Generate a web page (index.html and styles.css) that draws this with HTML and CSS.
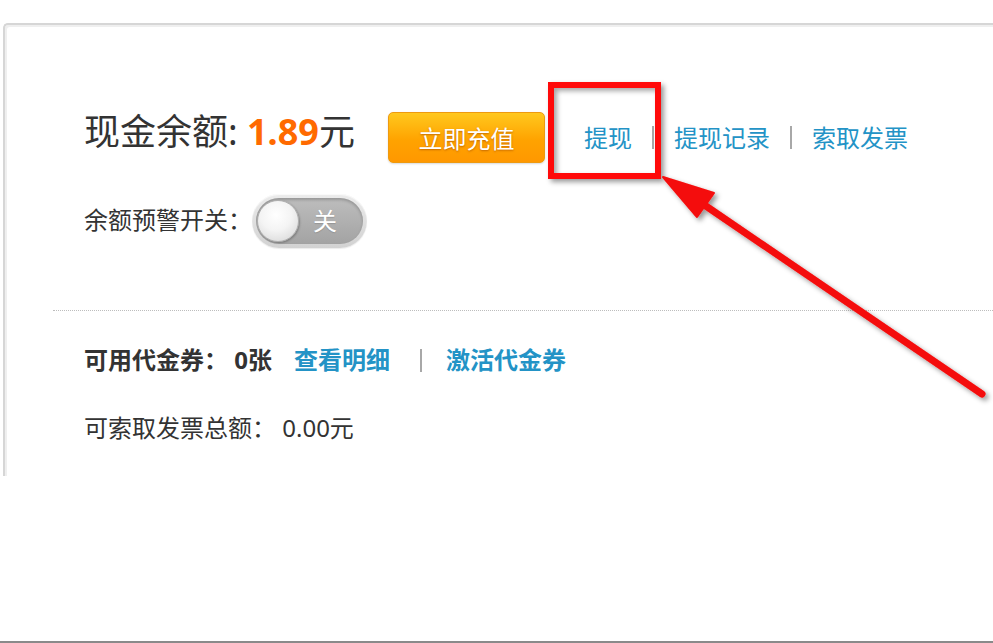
FILE: index.html
```html
<!DOCTYPE html>
<html lang="zh-CN">
<head>
<meta charset="utf-8">
<title>账户余额</title>
<link rel="stylesheet" href="styles.css">
</head>
<body>
<div class="page">
  <div class="card">
    <div class="row balance-row">
      <div class="balance">现金余额: <span class="amount">1.89</span>元</div>
      <a class="btn-recharge">立即充值</a>
      <div class="links">
        <a class="link">提现</a>
        <span class="sep"></span>
        <a class="link">提现记录</a>
        <span class="sep"></span>
        <a class="link">索取发票</a>
      </div>
    </div>
    <div class="row warn-row">
      <span class="warn-label">余额预警开关：</span>
      <div class="toggle">
        <div class="toggle-track">
          <span class="toggle-knob"></span>
          <span class="toggle-text">关</span>
        </div>
      </div>
    </div>
    <div class="divider"></div>
    <div class="row coupon-row">
      <span class="coupon-label">可用代金券： 0张</span>
      <a class="link bold first">查看明细</a>
      <span class="sep small"></span>
      <a class="link bold">激活代金券</a>
    </div>
    <div class="row invoice-row">可索取发票总额： 0.00元</div>
  </div>
  <div class="bottom-line"></div>
</div>

<div class="highlight-box"></div>
<svg class="arrow" width="993" height="643" viewBox="0 0 993 643">
  <defs>
    <filter id="sh" x="-20%" y="-20%" width="140%" height="140%">
      <feDropShadow dx="3" dy="3" stdDeviation="2.5" flood-color="#000" flood-opacity="0.4"/>
    </filter>
  </defs>
  <g filter="url(#sh)" fill="#f40a0a" stroke="#f40a0a">
    <line x1="982" y1="394" x2="700" y2="202" stroke-width="7" stroke-linecap="round"/>
    <polygon points="663,177 714,193 697,217" stroke-width="2" stroke-linejoin="round"/>
  </g>
</svg>
</body>
</html>
```

FILE: styles.css
```css
html, body {
  margin: 0;
  padding: 0;
  background: #ffffff;
}
body {
  width: 993px;
  height: 643px;
  overflow: hidden;
  position: relative;
  font-family: "Noto Sans", "Noto Sans CJK SC", sans-serif;
  color: #333333;
}
.page {
  height: 643px;
  display: flex;
  flex-direction: column;
}
.card {
  flex: none;
  box-sizing: border-box;
  height: 453px;
  margin-top: 23px;
  margin-left: 3px;
  border: 2px solid #d6d6d6;
  border-right: none;
  border-bottom: none;
  border-top-left-radius: 5px;
  box-shadow: inset 2px 2px 0 #efefef;
  padding-top: 87px;
}
.row {
  display: flex;
  align-items: center;
  padding-left: 79px;
}
.balance-row {
  height: 51px;
}
.balance {
  font-size: 36px;
  line-height: 40px;
  margin-bottom: 12px;
  white-space: nowrap;
}
.amount {
  color: #ff6a00;
  font-weight: bold;
}
.btn-recharge {
  box-sizing: border-box;
  width: 157px;
  height: 51px;
  margin-left: 33px;
  display: flex;
  align-items: center;
  justify-content: center;
  font-size: 24px;
  color: #ffffff;
  text-shadow: 0 1px 2px rgba(170, 80, 0, 0.7);
  background: linear-gradient(#ffc81e, #ffa300 55%, #ff9800);
  border: 1px solid #ee9a10;
  border-radius: 5px;
  box-shadow: 0 1px 2px rgba(0, 0, 0, 0.15);
}
.links {
  display: flex;
  align-items: center;
  margin-left: 39px;
}
.link {
  font-size: 24px;
  line-height: 30px;
  color: #2393c6;
  white-space: nowrap;
}
.sep {
  display: inline-block;
  width: 2px;
  height: 23px;
  background: #a8a8a8;
  margin: 0 20px;
}
.warn-row {
  margin-top: 31px;
  height: 54px;
}
.warn-label {
  font-size: 24px;
  line-height: 30px;
  margin-bottom: 3px;
  white-space: nowrap;
}
.toggle {
  box-sizing: border-box;
  width: 115px;
  height: 54px;
  border-radius: 27px;
  padding: 4px;
  background: linear-gradient(#ececec, #d2d2d2);
  box-shadow: inset 0 1px 1px rgba(255,255,255,0.8), 0 1px 1px rgba(0,0,0,0.08);
}
.toggle-track {
  position: relative;
  height: 46px;
  border-radius: 23px;
  background: linear-gradient(#bdbdbd, #a3a3a3);
  box-shadow: inset 0 2px 3px rgba(0,0,0,0.2);
  display: flex;
  align-items: center;
}
.toggle-knob {
  flex: none;
  box-sizing: border-box;
  width: 42px;
  height: 42px;
  margin-left: 1px;
  border-radius: 50%;
  background: radial-gradient(circle at 45% 35%, #ffffff 0%, #f4f4f4 45%, #d2d2d2 100%);
  border: 1px solid #b0b0b0;
  box-shadow: 1px 1px 2px rgba(0,0,0,0.25);
}
.toggle-text {
  margin-left: 14px;
  font-size: 24px;
  line-height: 30px;
  color: #ffffff;
  text-shadow: 0 1px 1px rgba(0,0,0,0.15);
}
.divider {
  margin-top: 62px;
  margin-left: 48px;
  border-top: 1px dotted #bdbdbd;
  height: 0;
}
.coupon-row {
  margin-top: 34px;
  height: 30px;
}
.coupon-label {
  font-size: 24px;
  line-height: 30px;
  font-weight: bold;
  white-space: nowrap;
}
.link.bold {
  font-weight: bold;
}
.link.first {
  margin-left: 22px;
}
.sep.small {
  margin: 0 24px 0 30px;
}
.invoice-row {
  margin-top: 38px;
  font-size: 24px;
  line-height: 30px;
  white-space: nowrap;
}
.bottom-line {
  margin-top: auto;
  height: 2px;
  background: #8a8a8a;
}
.highlight-box {
  position: absolute;
  left: 548px;
  top: 82px;
  width: 113px;
  height: 97px;
  box-sizing: border-box;
  border: 6px solid #ff0a0a;
  box-shadow: 3px 3px 5px rgba(0,0,0,0.4), inset 3px 3px 5px rgba(0,0,0,0.35);
}
.arrow {
  position: absolute;
  left: 0;
  top: 0;
  pointer-events: none;
}
```
